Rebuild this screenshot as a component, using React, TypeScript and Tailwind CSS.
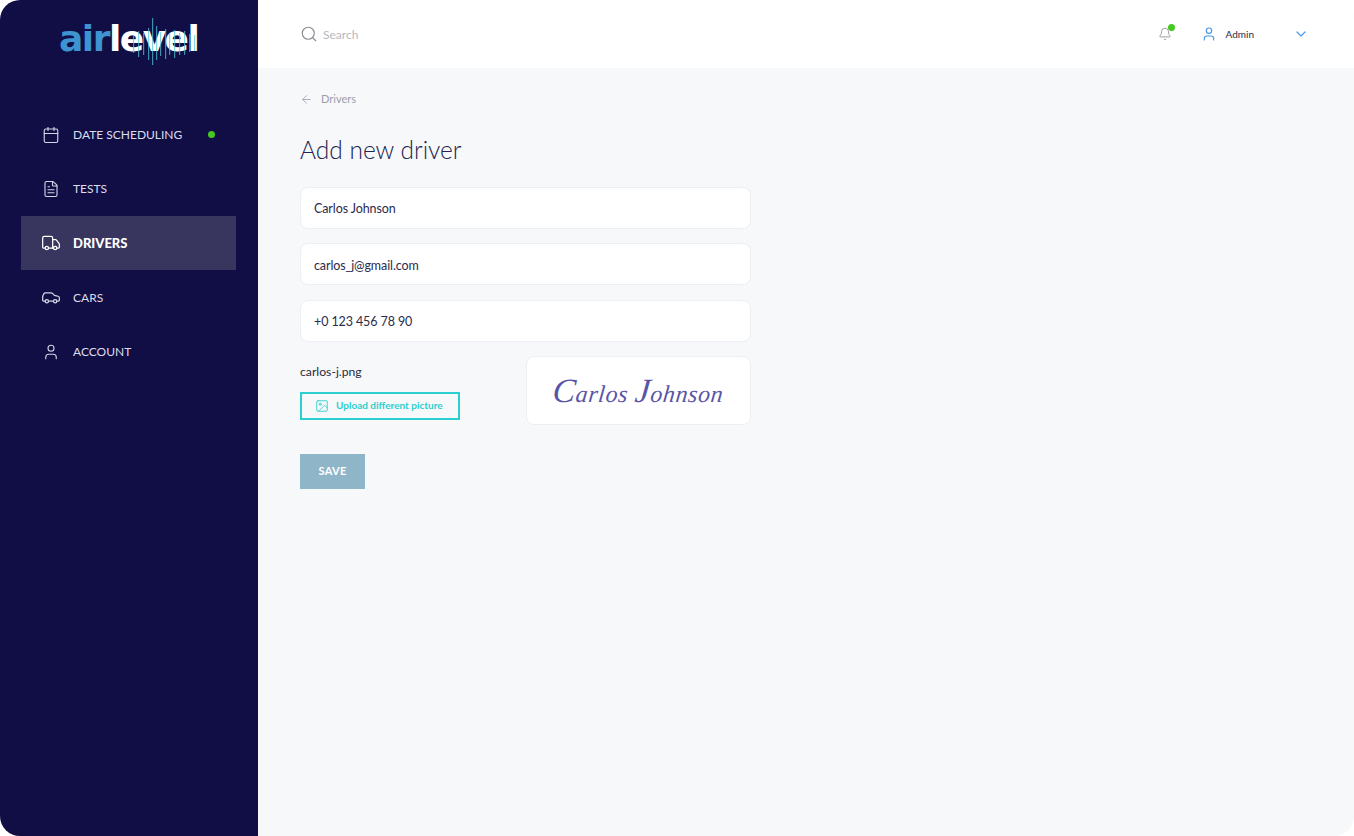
import React from 'react';
import { Calendar, FileText, Truck, Car, User, Search, Bell, ChevronDown, ArrowLeft, Image } from 'lucide-react';

const navItems = [
  { label: 'DATE SCHEDULING', icon: Calendar, size: 'w-[18px] h-[18px]', dot: true },
  { label: 'TESTS', icon: FileText, size: 'w-[18px] h-[18px]' },
  { label: 'DRIVERS', icon: Truck, size: 'w-[20px] h-[20px]', active: true },
  { label: 'CARS', icon: Car, size: 'w-[20px] h-[20px]' },
  { label: 'ACCOUNT', icon: User, size: 'w-[18px] h-[18px]' },
];

// [x, y, height] of each line of the sound wave behind the logo
const waveBars = [
  [2, 17, 18], [7, 13, 26], [12, 15, 22], [17, 10, 32], [21, 0, 47], [25, 8, 34], [29, 14, 24],
  [34, 11, 30], [38, 15, 22], [43, 12, 28], [48, 15, 22], [53, 13, 24], [58, 16, 18], [63, 17, 16],
];

function Logo() {
  return (
    <div className="relative h-[47px] w-[140px]">
      <div className="absolute left-0 top-[1px] flex text-[36px] leading-[40px] font-bold tracking-[-1.5px] font-['DejaVu_Sans',sans-serif]">
        <span className="text-[#3d94d0]">air</span>
        <span className="text-white">level</span>
      </div>
      {/* sound wave across the word */}
      <svg className="absolute left-[72px] top-0" width="68" height="47" viewBox="0 0 68 47">
        {waveBars.map(([x, y, h]) => (
          <rect key={x} x={x} y={y} width="1.2" height={h} fill="#4fc6d8" opacity="0.7" />
        ))}
      </svg>
    </div>
  );
}

function Field({ value }: { value: string }) {
  return (
    <div className="h-[42px] w-[451px] flex items-center px-[13px] pt-[4px] bg-white border border-[#eeeff4] rounded-lg text-[12.5px] tracking-[-0.1px] text-[#2b2b4d]">
      {value}
    </div>
  );
}

export default function App() {
  return (
    <div className="h-[836px] w-[1354px] bg-white font-['Lato',sans-serif]">
      <div className="h-full w-full flex rounded-[20px] overflow-hidden bg-[#f7f8fa]">
        {/* Sidebar */}
        <aside className="w-[258px] shrink-0 bg-[#110e46] flex flex-col">
          <div className="h-[80px] pl-[59px] pt-[18px]">
            <Logo />
          </div>
          <nav className="mt-[27.6px] pl-[21px] pr-[22px] flex flex-col gap-[0.3px]">
            {navItems.map(({ label, icon: Icon, size, dot, active }) => (
              <div
                key={label}
                className={`h-[54px] flex items-center pl-[20px] pr-[21px] ${active ? 'bg-[#38365f]' : ''}`}
              >
                <span className="w-[20px] flex justify-center shrink-0">
                  <Icon className={`${size} ${active ? 'text-white' : 'text-[#d5d5e4]'}`} strokeWidth={1.5} />
                </span>
                <span
                  className={`ml-[12px] mt-[1px] ${active ? 'text-[13px] font-black text-white' : 'text-[12px] text-[#dcdcea]'}`}
                >
                  {label}
                </span>
                {dot && <span className="ml-auto w-[7px] h-[7px] rounded-full bg-[#46c81e]" />}
              </div>
            ))}
          </nav>
        </aside>

        <main className="flex-1 flex flex-col">
          {/* Top bar */}
          <header className="h-[68px] bg-white flex items-center pl-[42px] pr-[45px]">
            <Search className="w-[18px] h-[18px] text-[#8b8b92]" strokeWidth={1.5} />
            <span className="ml-[5px] mt-[1px] text-[12px] text-[#b8b8c0]">Search</span>
            <div className="ml-auto relative w-[16px] h-[16px]">
              <Bell className="w-[14px] h-[14px] mt-[1px] text-[#8f8f98]" strokeWidth={1.5} />
              <span className="absolute -top-[2px] right-[-1px] w-[7px] h-[7px] rounded-full bg-[#46c81e]" />
            </div>
            <User className="ml-[27px] w-[16px] h-[16px] text-[#4b9be8]" strokeWidth={1.8} />
            <span className="ml-[9px] text-[10px] text-[#2a2a4a]">Admin</span>
            <ChevronDown className="ml-[39px] w-[16px] h-[16px] text-[#4b9be8]" strokeWidth={1.8} />
          </header>

          {/* Content */}
          <div className="pl-[42px] pt-[23px]">
            <div className="flex items-center gap-[8px] text-[#9c9dab]">
              <ArrowLeft className="w-[13px] h-[13px]" strokeWidth={1.5} />
              <span className="text-[11px]">Drivers</span>
            </div>
            <h1 className="mt-[25px] text-[24.5px] leading-[34px] font-light text-[#23234f]">Add new driver</h1>

            <div className="mt-[20px] flex flex-col gap-[14.5px]">
              <Field value="Carlos Johnson" />
              <Field value="carlos_j@gmail.com" />
              <Field value="+0 123 456 78 90" />
            </div>

            <div className="mt-[14.5px] w-[451px] flex justify-between">
              <div className="pt-[7.5px]">
                <div className="text-[12.2px] leading-[16px] text-[#2a2a3d]">carlos-j.png</div>
                <button className="mt-[12px] w-[160px] h-[28px] flex items-center border-2 border-[#2ccfcf] pl-[13px] text-[#2ccfcf]">
                  <Image className="w-[14px] h-[14px]" strokeWidth={1.5} />
                  <span className="ml-[7px] text-[10px] font-bold">Upload different picture</span>
                </button>
              </div>
              <div className="w-[225px] h-[69px] bg-white border border-[#eeeff4] rounded-lg flex items-center justify-center">
                <span className="-skew-x-6 text-[24px] italic text-[#5a54a6] font-['Liberation_Serif',serif] tracking-[0.6px]">
                  <span className="text-[34px]">C</span>arlos <span className="text-[34px]">J</span>ohnson
                </span>
              </div>
            </div>

            <button className="mt-[28.5px] w-[65px] h-[35px] bg-[#8fb6c8] text-white text-[11px] font-bold tracking-[0.3px]">
              SAVE
            </button>
          </div>
        </main>
      </div>
    </div>
  );
}
